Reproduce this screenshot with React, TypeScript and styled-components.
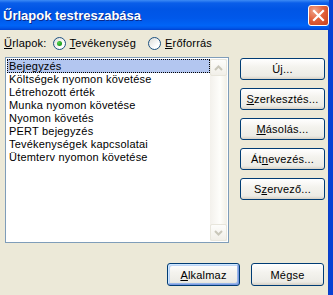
import React from 'react';
import styled, { createGlobalStyle } from 'styled-components';

const GlobalStyle = createGlobalStyle`
  html, body {
    margin: 0;
    padding: 0;
    background: #ece9d8;
  }
  body {
    font-family: "Liberation Sans", Arial, sans-serif;
    font-size: 11px;
    letter-spacing: 0.2px;
    color: #000;
  }
`;

const forms = [
  'Bejegyzés',
  'Költségek nyomon követése',
  'Létrehozott érték',
  'Munka nyomon követése',
  'Nyomon követés',
  'PERT bejegyzés',
  'Tevékenységek kapcsolatai',
  'Ütemterv nyomon követése',
];

const App = () => {
  return (
    <>
      <GlobalStyle />
      <Window>
        <TitleBar>
          <TitleText>Űrlapok testreszabása</TitleText>
          <CloseButton aria-label="Bezárás">
            <svg width="13" height="13" viewBox="0 0 13 13">
              <path d="M2 2 L11 11 M11 2 L2 11" stroke="#fff" strokeWidth="2.2" strokeLinecap="square" />
            </svg>
          </CloseButton>
        </TitleBar>
        <Body>
          <ChoiceRow>
            <Label>
              <Key>Ű</Key>rlapok:
            </Label>
            <Radio>
              <RadioDot checked />
              <span>
                <Key>T</Key>evékenység
              </span>
            </Radio>
            <Radio>
              <RadioDot />
              <span>
                <Key>E</Key>rőforrás
              </span>
            </Radio>
          </ChoiceRow>

          <MainRow>
            <ListBox>
              <Items>
                {forms.map((f, i) => (
                  <Item key={f} selected={i === 0}>
                    {f}
                  </Item>
                ))}
              </Items>
              <ScrollBar>
                <ScrollButton>
                  <svg width="9" height="6" viewBox="0 0 9 6">
                    <path d="M1 5 L4.5 1.5 L8 5" fill="none" stroke="#c9c7ba" strokeWidth="2" />
                  </svg>
                </ScrollButton>
                <ScrollButton>
                  <svg width="9" height="6" viewBox="0 0 9 6">
                    <path d="M1 1 L4.5 4.5 L8 1" fill="none" stroke="#c9c7ba" strokeWidth="2" />
                  </svg>
                </ScrollButton>
              </ScrollBar>
            </ListBox>

            <SideButtons>
              <Button wide>
                Ú<Key>j</Key>...
              </Button>
              <Button wide>
                <Key>S</Key>zerkesztés...
              </Button>
              <Button wide>
                <Key>M</Key>ásolás...
              </Button>
              <Button wide>
                Át<Key>n</Key>evezés...
              </Button>
              <Button wide>
                S<Key>z</Key>ervező...
              </Button>
            </SideButtons>
          </MainRow>

          <Footer>
            <Button isDefault>
              <Key>A</Key>lkalmaz
            </Button>
            <Button>Mégse</Button>
          </Footer>
        </Body>
      </Window>
    </>
  );
};

export default App;

const Window = styled.div`
  width: 333px;
  height: 295px;
  box-sizing: border-box;
  display: flex;
  flex-direction: column;
  border-right: 4px solid #0842d4;
  box-shadow: inset -1px 0 #0a3fc6;
  background: #ece9d8;
  overflow: hidden;
`;

const TitleBar = styled.div`
  height: 30px;
  flex-shrink: 0;
  display: flex;
  align-items: center;
  justify-content: space-between;
  padding: 0 4px 0 3px;
  margin-right: -4px;
  background: linear-gradient(
    180deg,
    #3d8bf5 0%,
    #0a5ee9 10%,
    #0055e5 30%,
    #0058ea 60%,
    #0064f7 85%,
    #0058ea 93%,
    #0042d2 100%
  );
`;

const TitleText = styled.span`
  font-family: "Liberation Sans", Arial, sans-serif;
  font-weight: bold;
  font-size: 13px;
  color: #fff;
  text-shadow: 1px 1px #0a2a8c;
  letter-spacing: 0;
  margin-top: 1px;
`;

const CloseButton = styled.div`
  width: 21px;
  height: 21px;
  box-sizing: border-box;
  border: 1px solid #fff;
  border-radius: 3px;
  display: flex;
  align-items: center;
  justify-content: center;
  background: radial-gradient(circle at 30% 25%, #f0a48a 0%, #e2623c 45%, #c8401a 100%);
`;

const Body = styled.div`
  flex: 1;
  display: flex;
  flex-direction: column;
  padding: 6px 4px 0 5px;
`;

const ChoiceRow = styled.div`
  display: flex;
  align-items: center;
  height: 14px;
  margin-bottom: 7px;
`;

const Label = styled.span`
  margin-left: -1px;
  margin-right: 6px;
`;

const Key = styled.span`
  text-decoration: underline;
`;

const Radio = styled.label`
  display: flex;
  align-items: center;
  gap: 4px;
  margin-right: 12px;
`;

const RadioDot = styled.span<{ checked?: boolean }>`
  position: relative;
  width: 13px;
  height: 13px;
  box-sizing: border-box;
  border-radius: 50%;
  border: 1px solid #1c5180;
  background: linear-gradient(135deg, #dcdcd7 0%, #fff 70%);
  &::after {
    content: '';
    display: ${p => (p.checked ? 'block' : 'none')};
    position: absolute;
    left: 3px;
    top: 3px;
    width: 5px;
    height: 5px;
    border-radius: 50%;
    background: radial-gradient(circle at 35% 35%, #55d451 0%, #21a121 60%, #1a8a1a 100%);
  }
`;

const MainRow = styled.div`
  display: flex;
  align-items: flex-start;
`;

const ListBox = styled.div`
  width: 224px;
  height: 186px;
  box-sizing: border-box;
  border: 1px solid #7f9db9;
  background: #fff;
  display: flex;
  padding: 1px 1px 1px 1px;
`;

const Items = styled.div`
  flex: 1;
  display: flex;
  flex-direction: column;
`;

const Item = styled.div<{ selected?: boolean }>`
  height: 13px;
  line-height: 13px;
  padding-left: 2px;
  white-space: nowrap;
  background: ${p => (p.selected ? '#b3c6f0' : 'transparent')};
  outline: ${p => (p.selected ? '1px dotted #000' : 'none')};
  outline-offset: -1px;
  &:first-child {
    height: 14px;
    line-height: 14px;
  }
`;

const ScrollBar = styled.div`
  width: 17px;
  display: flex;
  flex-direction: column;
  justify-content: space-between;
  background: linear-gradient(90deg, #f3f1ec 0%, #fefefb 60%, #f1efe6 100%);
`;

const ScrollButton = styled.div`
  width: 17px;
  height: 17px;
  box-sizing: border-box;
  border: 1px solid #e8e6dc;
  border-radius: 2px;
  background: linear-gradient(180deg, #fdfdfb 0%, #f1efe8 100%);
  display: flex;
  align-items: center;
  justify-content: center;
`;

const SideButtons = styled.div`
  display: flex;
  flex-direction: column;
  gap: 8px;
  margin-left: 11px;
  margin-top: 1px;
`;

const Button = styled.div<{ wide?: boolean; isDefault?: boolean }>`
  width: ${p => (p.wide ? '85px' : '73px')};
  height: ${p => (p.wide ? '22px' : '23px')};
  box-sizing: border-box;
  border: 1px solid #003c74;
  border-radius: 3px;
  display: flex;
  align-items: center;
  justify-content: center;
  white-space: nowrap;
  background: linear-gradient(180deg, #ffffff 0%, #f4f3ee 40%, #ecebe5 85%, #d6d0c5 100%);
  box-shadow: ${p =>
    p.isDefault
      ? 'inset -1px -1px #7c99e0, inset 1px 1px #cee7ff, inset -2px -2px #98b8ea, inset 2px 2px #bcd4f6'
      : 'none'};
`;

const Footer = styled.div`
  display: flex;
  justify-content: flex-end;
  gap: 11px;
  margin-top: 20px;
  padding-right: 1px;
`;
